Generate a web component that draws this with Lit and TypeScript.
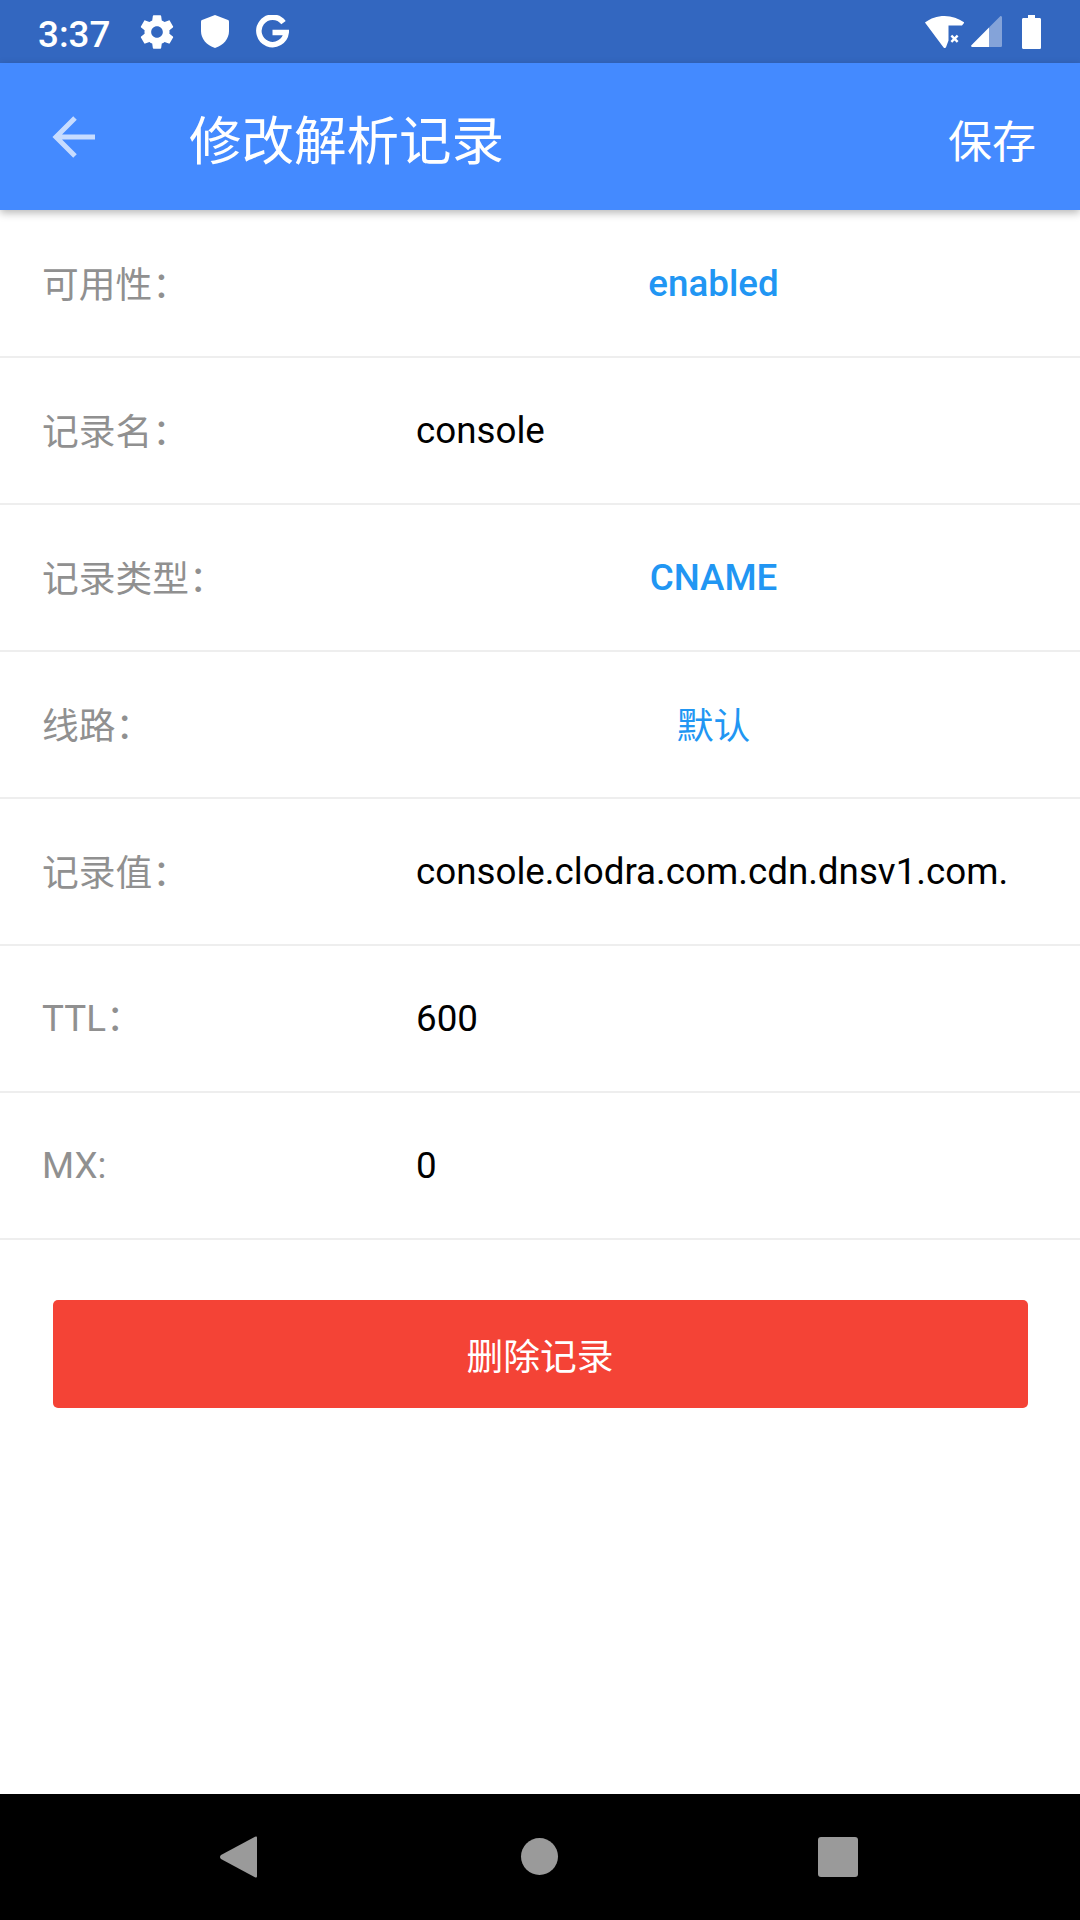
import { LitElement, html, css } from 'lit';
import { customElement } from 'lit/decorators.js';

type Row = { label: string; value: string; kind: 'text' | 'pick' | 'pick-cjk'; cjk: boolean };

const rows: Row[] = [
    { label: '可用性：', value: 'enabled', kind: 'pick', cjk: true },
    { label: '记录名：', value: 'console', kind: 'text', cjk: true },
    { label: '记录类型：', value: 'CNAME', kind: 'pick', cjk: true },
    { label: '线路：', value: '默认', kind: 'pick-cjk', cjk: true },
    { label: '记录值：', value: 'console.clodra.com.cdn.dnsv1.com.', kind: 'text', cjk: true },
    { label: 'TTL：', value: '600', kind: 'text', cjk: false },
    { label: 'MX:', value: '0', kind: 'text', cjk: false },
];

@customElement("app-root")
export default class AppRoot extends LitElement {
    render() {
        return html`
            <div class="screen">
                <div class="status">
                    <span class="time">3:37</span>
                    <svg class="gear" viewBox="0 0 24 24">
                        <path fill="#fff" d="M19.43 12.98c.04-.32.07-.64.07-.98s-.03-.66-.07-.98l2.11-1.65c.19-.15.24-.42.12-.64l-2-3.46c-.12-.22-.39-.3-.61-.22l-2.49 1c-.52-.4-1.08-.73-1.69-.98l-.38-2.65C14.46 2.18 14.25 2 14 2h-4c-.25 0-.46.18-.49.42l-.38 2.65c-.61.25-1.17.59-1.69.98l-2.49-1c-.23-.09-.49 0-.61.22l-2 3.46c-.13.22-.07.49.12.64l2.11 1.65c-.04.32-.07.65-.07.98s.03.66.07.98l-2.11 1.65c-.19.15-.24.42-.12.64l2 3.46c.12.22.39.3.61.22l2.49-1c.52.4 1.08.73 1.69.98l.38 2.65c.03.24.24.42.49.42h4c.25 0 .46-.18.49-.42l.38-2.65c.61-.25 1.17-.59 1.69-.98l2.49 1c.23.09.49 0 .61-.22l2-3.46c.12-.22.07-.49-.12-.64l-2.11-1.65zM12 15.5c-1.93 0-3.5-1.57-3.5-3.5s1.57-3.5 3.5-3.5 3.5 1.57 3.5 3.5-1.57 3.5-3.5 3.5z"/>
                    </svg>
                    <svg class="shield" viewBox="0 0 28 33">
                        <path fill="#fff" d="M14 0 27 5c.7.3 1 .8 1 1.500V16c0 8-5.500 14-14 17C5.500 30 0 24 0 16V6.500C0 5.800.3 5.300 1 5z"/>
                    </svg>
                    <svg class="g" viewBox="0 0 33 33">
                        <path fill="none" stroke="#fff" stroke-width="5.500" d="M27.500 7.600A13.700 13.700 0 1 0 30.200 17.500H16.500"/>
                    </svg>
                    <span class="spacer"></span>
                    <svg class="wifi" viewBox="0 0 39 32">
                        <path fill="#fff" d="M19.500 0C27 0 33.500 2.300 39 6.300c.2.200.2.500 0 .8l-2 2.400H23.500V24.500L21 31.300c-.8 1-1.800 1-2.600 0L.3 7.100c-.3-.3-.3-.6 0-.8C5.500 2.300 12 0 19.500 0z"/>
                        <path fill="#fff" d="m27.200 18.800 2.300 2.200 2.300-2.200 1.700 1.700-2.300 2.300 2.300 2.300-1.700 1.700-2.300-2.300-2.300 2.300-1.700-1.700 2.300-2.300-2.300-2.300z"/>
                    </svg>
                    <svg class="signal" viewBox="0 0 31 31">
                        <path fill="#fff" fill-opacity=".4" d="M29.500 0c.9 0 1.500.5 1.500 1.500V29.500c0 1-.6 1.500-1.500 1.500H18V11.500z"/>
                        <path fill="#fff" d="M18 11.500V31H1c-.9 0-1.300-1-.6-1.700z"/>
                    </svg>
                    <svg class="battery" viewBox="0 0 19 34">
                        <path fill="#fff" d="M6 0h7v3h4.500c1 0 1.500.6 1.500 1.500v28c0 1-.6 1.500-1.500 1.500H1.500C.6 34 0 33.400 0 32.500v-28C0 3.600.6 3 1.500 3H6z"/>
                    </svg>
                </div>
                <div class="bar">
                    <svg class="back" viewBox="0 0 43 42">
                        <path fill="none" stroke="#fff" stroke-width="5" d="M43 21H5M23 2 4 21l19 19"/>
                    </svg>
                    <span class="title">修改解析记录</span>
                    <span class="save">保存</span>
                </div>
                <div class="list">
                    ${rows.map((r) => html`
                        <div class="row">
                            <span class="label ${r.cjk ? 'cjk' : ''}">${r.label}</span>
                            <span class="value ${r.kind}">${r.value}</span>
                        </div>
                    `)}
                </div>
                <div class="action"><button class="delete">删除记录</button></div>
                <div class="nav">
                    <svg class="tri" viewBox="0 0 37 42">
                        <path fill="#9a9a9a" d="M36 0.500c.7 0 1 .5 1 1.200v38.600c0 .8-.6 1.500-1.600 1.200L1 23c-1.300-1-1.300-3 0-4L35 .8z"/>
                    </svg>
                    <span class="dot"></span>
                    <span class="square"></span>
                </div>
            </div>
        `;
    };

    static styles = css`
        :host {
            display: block;
            font-family: Roboto, "Noto Sans CJK SC", sans-serif;
        }

        .screen {
            width: 1080px;
            height: 1920px;
            display: flex;
            flex-direction: column;
            background-color: #fff;
        }

        .status {
            height: 63px;
            flex: none;
            display: flex;
            align-items: center;
            padding: 0 39px 0 38px;
            box-sizing: border-box;
            background-color: #3367c0;
            color: #fff;
        }

        .time {
            font-size: 36.75px;
            font-weight: 500;
            width: 103px;
            line-height: 70px;
            height: 63px;
        }

        .gear { width: 40px; height: 40px; margin: 0 24px 0 -4px; }
        .shield { width: 28px; height: 33px; margin-right: 27px; }
        .g { width: 33px; height: 33px; }
        .spacer { flex: 1; }
        .wifi { width: 39px; height: 32px; margin-right: 7px; }
        .signal { width: 31px; height: 31px; margin-right: 20px; }
        .battery { width: 19px; height: 34px; }

        .bar {
            height: 147px;
            flex: none;
            display: flex;
            align-items: center;
            padding: 0 44px 0 52px;
            box-sizing: border-box;
            background-color: #448aff;
            color: #fff;
            box-shadow: 0 3px 8px rgba(0, 0, 0, 0.28);
            position: relative;
        }

        .back { width: 43px; height: 42px; opacity: 0.7; margin-right: 94px; }
        .title { font-size: 52.5px; flex: 1; line-height: 60px; padding-top: 10px; }
        .save { font-size: 44px; line-height: 60px; padding-top: 12px; }

        .list { padding-top: 1px; }

        .row {
            height: 147px;
            box-sizing: border-box;
            border-bottom: 2px solid #eeeeee;
            display: flex;
            align-items: center;
            font-size: 36.75px;
            line-height: 44px;
        }

        .label {
            width: 416px;
            padding-left: 42px;
            box-sizing: border-box;
            color: #909090;
        }

        .label.cjk { padding-top: 4px; }

        .value { color: #000; }

        .pick, .pick-cjk {
            width: 595px;
            text-align: center;
            color: #2196f3;
        }

        .pick { font-weight: 500; }
        .pick-cjk { padding-top: 4px; }

        .action { padding: 60px 52.5px 0; }

        .delete {
            display: block;
            width: 100%;
            height: 108px;
            padding: 7px 0 0;
            border: none;
            border-radius: 5px;
            background-color: #f44336;
            color: #fff;
            font-size: 36.75px;
            line-height: 44px;
            font-family: inherit;
        }

        .nav {
            margin-top: auto;
            height: 126px;
            flex: none;
            background-color: #000;
            position: relative;
        }

        .tri { position: absolute; left: 220px; top: 42px; width: 37px; height: 42px; }
        .dot { position: absolute; left: 521px; top: 44px; width: 37px; height: 37px; border-radius: 50%; background-color: #9a9a9a; }
        .square { position: absolute; left: 818px; top: 43px; width: 40px; height: 40px; border-radius: 3px; background-color: #9a9a9a; }
    `;
};
